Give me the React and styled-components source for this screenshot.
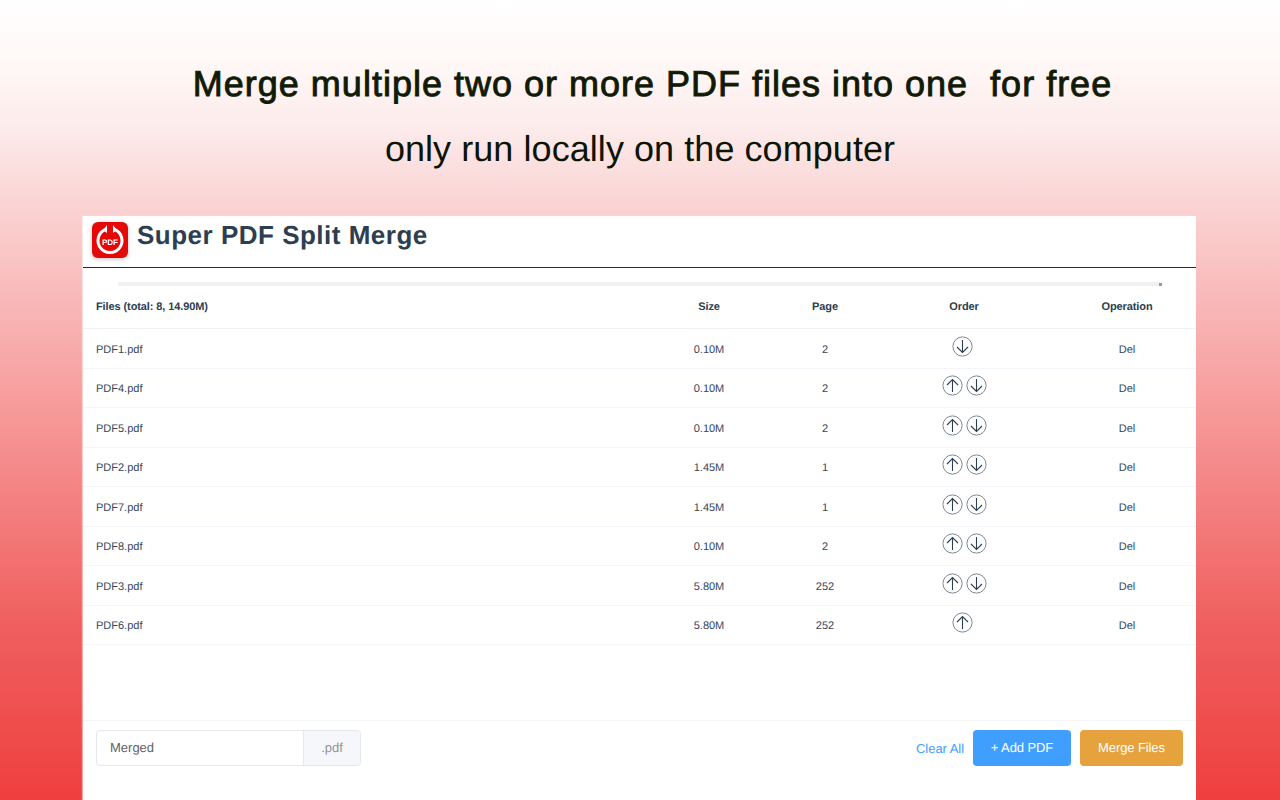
import React from "react";
import styled, { createGlobalStyle } from "styled-components";

const Global = createGlobalStyle`
  html, body {
    margin: 0;
    padding: 0;
    height: 800px;
    overflow: hidden;
  }
  * {
    box-sizing: border-box;
  }
`;

const Page = styled.div`
  width: 1280px;
  height: 800px;
  display: flex;
  flex-direction: column;
  align-items: flex-start;
  background: linear-gradient(180deg, #ffffff 0%, #fff9f8 7%, #fdebeb 16%, #fad0d0 27%, #f79c9c 50%, #f05f5f 78%, #ef3f3f 100%);
  font-family: "Liberation Sans", Arial, sans-serif;
  text-rendering: geometricPrecision;
`;

const Hero = styled.div`
  width: 100%;
  height: 216px;
  padding-top: 60px;
  display: flex;
  flex-direction: column;
  align-items: center;
`;

const Headline = styled.h1`
  margin: 0 0 0 25px;
  font-size: 36px;
  line-height: 48px;
  font-weight: 400;
  letter-spacing: 1px;
  color: #101a05;
  white-space: pre;
  -webkit-text-stroke: 0.9px #101a05;
`;

const Subline = styled.p`
  margin: 17px 0 0;
  font-size: 36px;
  line-height: 48px;
  letter-spacing: 0.06px;
  color: #0c1404;
`;

const Window = styled.div`
  margin-left: 83px;
  width: 1113px;
  flex: 1;
  display: flex;
  flex-direction: column;
  background: #fff;
  color: #2c3e50;
  box-shadow: -1px 0 1px rgba(255, 255, 255, 0.5);
`;

const TitleBar = styled.div`
  height: 52px;
  padding: 6px 9px 0;
  display: flex;
  align-items: flex-start;
  gap: 9px;
  border-bottom: 1px solid #2b2b2b;
`;

const Logo = styled.svg`
  width: 36px;
  height: 36px;
  flex: none;
  filter: drop-shadow(0 1px 2px rgba(0, 0, 0, 0.25));
`;

const AppName = styled.div`
  font-size: 26px;
  line-height: 26px;
  font-weight: 700;
  letter-spacing: 0.5px;
`;

const Strip = styled.div`
  height: 4px;
  margin: 14px 34px 0 35px;
  background: #f0f0f0;
  border-radius: 2px 2px 0 0;
  position: relative;
  &::after {
    content: "";
    position: absolute;
    right: 0;
    top: 1px;
    width: 3px;
    height: 3px;
    background: #999;
  }
`;

const Row = styled.div`
  display: grid;
  grid-template-columns: 561px 130px 102px 176px 144px;
  align-items: center;
  height: ${(props) => (props.$head ? "43px" : "39.5px")};
  padding-top: ${(props) => (props.$head ? "0" : "3px")};
  border-bottom: 1px solid ${(props) => (props.$head ? "#f0f1f4" : "#f3f5fb")};
  font-size: 11px;
  font-weight: ${(props) => (props.$head ? 700 : 400)};
  letter-spacing: ${(props) => (props.$head ? "-0.1px" : "0")};
  color: ${(props) => (props.$head ? "#2c3e50" : "#35465a")};
`;

const NameCell = styled.div`
  padding-left: 13px;
`;

const Cell = styled.div`
  text-align: center;
`;

const OpCell = styled.div`
  text-align: center;
  padding-left: 6px;
`;

const OrderCell = styled.div`
  display: flex;
  justify-content: center;
  gap: 3px;
  margin-top: -7px;
  margin-left: ${(props) => (props.$single ? "-4px" : "1px")};
`;

const OrderIcon = styled.svg`
  width: 21px;
  height: 21px;
  display: block;
  fill: none;
`;

const Spacer = styled.div`
  flex: 1;
`;

const Footer = styled.div`
  height: 80px;
  border-top: 1px solid #f3f4f6;
  padding: 9px 13px 0;
  display: flex;
  align-items: flex-start;
  justify-content: space-between;
`;

const NameInput = styled.div`
  display: flex;
  width: 265px;
  height: 36px;
  border: 1px solid #e4e7ed;
  border-radius: 4px;
  font-size: 13px;
  line-height: 34px;
  overflow: hidden;
`;

const InputText = styled.div`
  flex: 1;
  padding-left: 13px;
  color: #606266;
`;

const Suffix = styled.div`
  width: 57px;
  text-align: center;
  background: #f5f7fa;
  border-left: 1px solid #e4e7ed;
  color: #909399;
`;

const Actions = styled.div`
  display: flex;
  align-items: center;
  gap: 9px;
`;

const ClearLink = styled.span`
  font-size: 13px;
  letter-spacing: -0.05px;
  color: #409eff;
`;

const Button = styled.div`
  width: ${(props) => props.$width}px;
  height: 36px;
  border-radius: 4px;
  background: ${(props) => props.$color};
  color: #fff;
  font-size: 13px;
  letter-spacing: -0.1px;
  line-height: 36px;
  text-align: center;
`;

const files = [
  ["PDF1.pdf", "0.10M", "2"],
  ["PDF4.pdf", "0.10M", "2"],
  ["PDF5.pdf", "0.10M", "2"],
  ["PDF2.pdf", "1.45M", "1"],
  ["PDF7.pdf", "1.45M", "1"],
  ["PDF8.pdf", "0.10M", "2"],
  ["PDF3.pdf", "5.80M", "252"],
  ["PDF6.pdf", "5.80M", "252"],
];

function ArrowIcon({ up }) {
  return (
    <OrderIcon viewBox="0 0 21 21">
      <circle cx="10.5" cy="10.5" r="9.6" stroke="#7d8794" strokeWidth="1" />
      <path
        d={up ? "M10.5 17V4.5M5 10l5.5-5.5L16 10" : "M10.5 4v12.5M5 11l5.5 5.5L16 11"}
        stroke="#2c3e50"
        strokeWidth="1.1"
      />
    </OrderIcon>
  );
}

export default function App() {
  return (
    <Page>
      <Global />
      <Hero>
        <Headline>Merge multiple two or more PDF files into one  for free</Headline>
        <Subline>only run locally on the computer</Subline>
      </Hero>
      <Window>
        <TitleBar>
          <Logo viewBox="0 0 36 36">
            <rect width="36" height="36" rx="6" fill="#e40808" />
            <path d="M13.5 7.4a12 12 0 1 0 9 0" fill="none" stroke="#fff" strokeWidth="3" />
            <path d="M15 3v8L11.2 8zM21 3v8l3.8-3z" fill="#fff" />
            <text x="18" y="22.5" textAnchor="middle" fontSize="8" fontWeight="700" fill="#fff" fontFamily="Liberation Sans, sans-serif">PDF</text>
          </Logo>
          <AppName>Super PDF Split Merge</AppName>
        </TitleBar>
        <Strip />
        <Row $head>
          <NameCell>Files (total: 8, 14.90M)</NameCell>
          <Cell>Size</Cell>
          <Cell>Page</Cell>
          <Cell>Order</Cell>
          <OpCell>Operation</OpCell>
        </Row>
        {files.map(([name, size, page], i) => {
          const first = i === 0;
          const last = i === files.length - 1;
          return (
            <Row key={name}>
              <NameCell>{name}</NameCell>
              <Cell>{size}</Cell>
              <Cell>{page}</Cell>
              <OrderCell $single={first || last}>
                {!first && <ArrowIcon up />}
                {!last && <ArrowIcon />}
              </OrderCell>
              <OpCell>Del</OpCell>
            </Row>
          );
        })}
        <Spacer />
        <Footer>
          <NameInput>
            <InputText>Merged</InputText>
            <Suffix>.pdf</Suffix>
          </NameInput>
          <Actions>
            <ClearLink>Clear All</ClearLink>
            <Button $width={98} $color="#409eff">+ Add PDF</Button>
            <Button $width={103} $color="#e6a23c">Merge Files</Button>
          </Actions>
        </Footer>
      </Window>
    </Page>
  );
}
